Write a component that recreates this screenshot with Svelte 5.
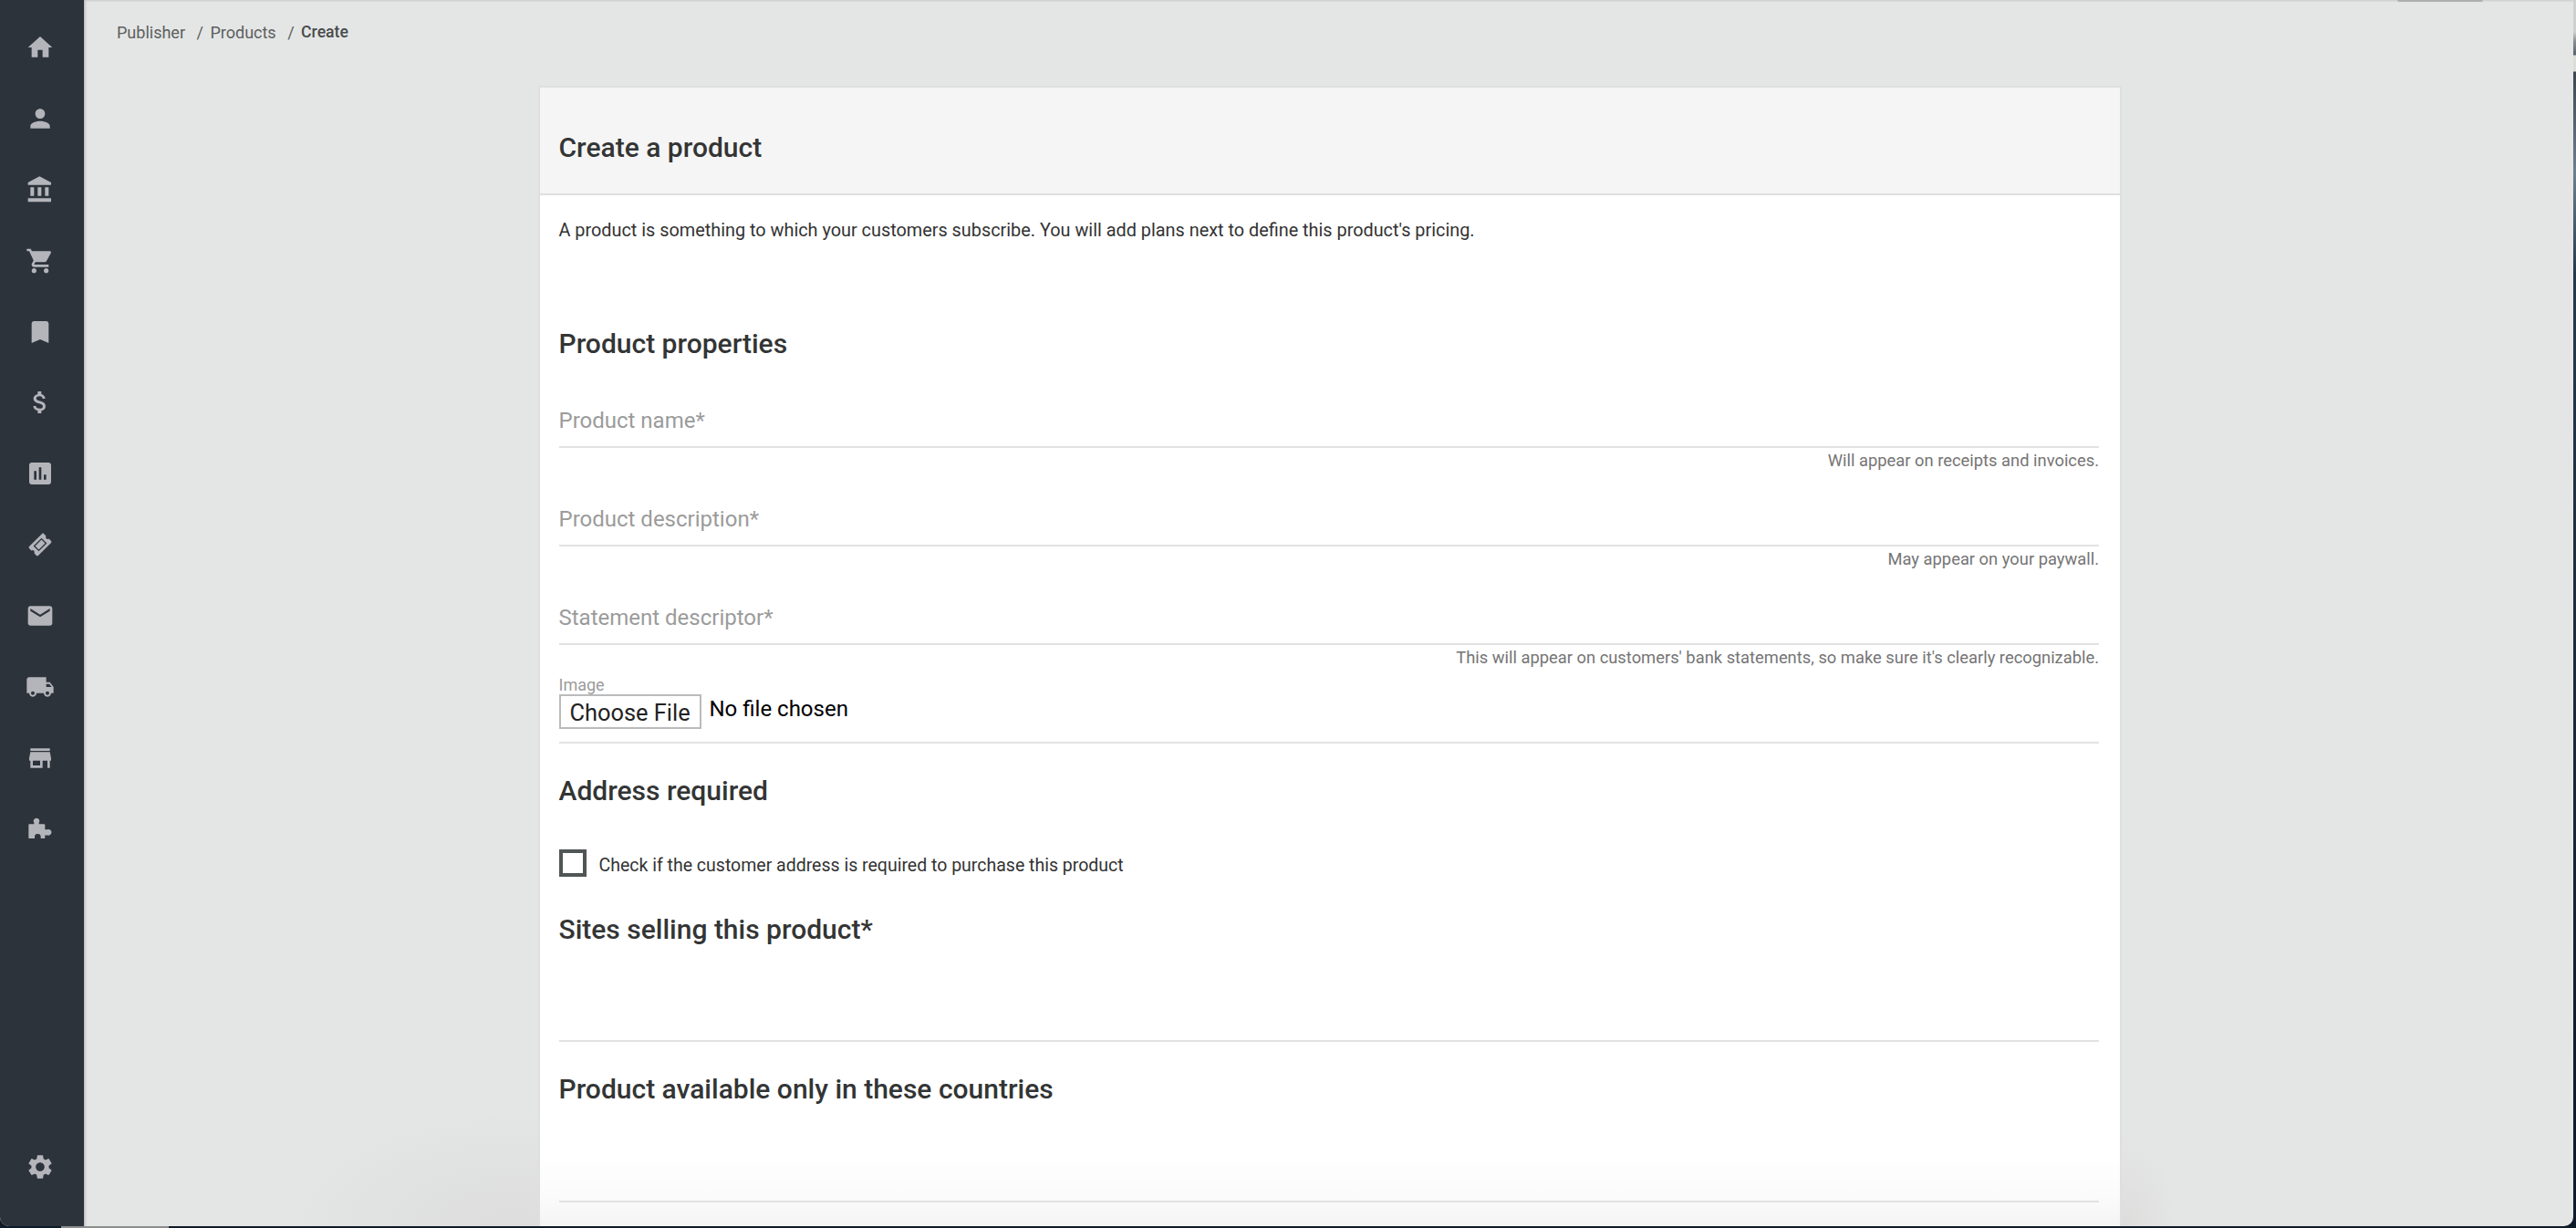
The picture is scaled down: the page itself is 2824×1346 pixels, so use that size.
<script>
  const icons = [
    { d: 'M10 20v-6h4v6h5v-8h3L12 3 2 12h3v8z' },
    { d: 'M12 12c2.21 0 4-1.79 4-4s-1.79-4-4-4-4 1.79-4 4 1.79 4 4 4zm0 2c-2.67 0-8 1.34-8 4v2h16v-2c0-2.66-5.33-4-8-4z' },
    { d: 'M4 10v7h3v-7H4zm6 0v7h3v-7h-3zM2 22h19v-3H2v3zm14-12v7h3v-7h-3zm-4.5-9L2 6v2h19V6l-9.5-5z' },
    { d: 'M7 18c-1.1 0-1.99.9-1.99 2S5.9 22 7 22s2-.9 2-2-.9-2-2-2zM1 2v2h2l3.6 7.59-1.35 2.45c-.16.28-.25.61-.25.96 0 1.1.9 2 2 2h12v-2H7.42c-.14 0-.25-.11-.25-.25l.03-.12.9-1.63h7.45c.75 0 1.41-.41 1.75-1.03l3.58-6.49c.08-.14.12-.31.12-.48 0-.55-.45-1-1-1H5.21l-.94-2H1zm16 16c-1.1 0-1.99.9-1.99 2s.89 2 1.99 2 2-.9 2-2-.9-2-2-2z' },
    { d: 'M17 3H7c-1.1 0-1.99.9-1.99 2L5 21l7-3 7 3V5c0-1.1-.9-2-2-2z' },
    { d: 'M11.8 10.9c-2.27-.59-3-1.2-3-2.15 0-1.09 1.01-1.85 2.7-1.85 1.78 0 2.44.85 2.5 2.1h2.21c-.07-1.72-1.12-3.3-3.21-3.81V3h-3v2.16c-1.94.42-3.5 1.68-3.5 3.61 0 2.31 1.91 3.46 4.7 4.13 2.5.6 3 1.48 3 2.41 0 .69-.49 1.79-2.7 1.79-2.06 0-2.87-.92-2.98-2.1h-2.2c.12 2.19 1.76 3.42 3.68 3.83V21h3v-2.15c1.95-.37 3.5-1.5 3.5-3.55 0-2.84-2.43-3.81-4.7-4.4z' },
    { d: 'M19 3H5c-1.1 0-2 .9-2 2v14c0 1.1.9 2 2 2h14c1.1 0 2-.9 2-2V5c0-1.1-.9-2-2-2zM9 17H7v-7h2v7zm4 0h-2V7h2v10zm4 0h-2v-4h2v4z' },
    // ticket drawn flat and turned, evenodd gives the ring inside it
    {
      d: 'M4.5 6.75h15c.55 0 1 .45 1 1v2.6a1.7 1.7 0 0 0 0 3.3v2.6c0 .55-.45 1-1 1h-15c-.55 0-1-.45-1-1v-2.6a1.7 1.7 0 0 0 0-3.3v-2.6c0-.55.45-1 1-1zM7.3 8.9v6.2h9.4V8.9H7.3zM8.3 9.9v4.2h7.4V9.9H8.3z',
      t: 'rotate(-45 12 12)'
    },
    { d: 'M20 4H4c-1.1 0-1.99.9-1.99 2L2 18c0 1.1.9 2 2 2h16c1.1 0 2-.9 2-2V6c0-1.1-.9-2-2-2zm0 4l-8 5-8-5V6l8 5 8-5v2z' },
    { d: 'M20 8h-3V4H3c-1.1 0-2 .9-2 2v11h2c0 1.66 1.34 3 3 3s3-1.34 3-3h6c0 1.66 1.34 3 3 3s3-1.34 3-3h2v-5l-3-4zM6 18.5c-.83 0-1.5-.67-1.5-1.5s.67-1.5 1.5-1.5 1.5.67 1.5 1.5-.67 1.5-1.5 1.5zm13.5-9l1.96 2.5H17V9.5h2.5zm-1.5 9c-.83 0-1.5-.67-1.5-1.5s.67-1.5 1.5-1.5 1.5.67 1.5 1.5-.67 1.5-1.5 1.5z' },
    { d: 'M20 4H4v2h16V4zm1 10v-2l-1-5H4l-1 5v2h1v6h10v-6h4v6h2v-6h1zm-9 4H6v-4h6v4z' },
    { d: 'M3 7.6h4v-1a2.4 2.4 0 1 1 4 0v1h4.3c.4 0 .7.3.7.7v3.9h1.9a2.5 2.5 0 1 1 0 4.6H16v2.1c0 .4-.3.6-.7.6h-2.8v-1.2a2.5 2.5 0 0 0-5 0v1.2H3c-.3 0-.5-.2-.5-.5V8.1c0-.3.2-.5.5-.5z' }
  ]
  const settings = 'M19.14 12.94c.04-.3.06-.61.06-.94 0-.32-.02-.64-.07-.94l2.03-1.58c.18-.14.23-.41.12-.61l-1.92-3.32c-.12-.22-.37-.29-.59-.22l-2.39.96c-.5-.38-1.03-.7-1.62-.94l-.36-2.54c-.04-.24-.24-.41-.48-.41h-3.84c-.24 0-.43.17-.47.41l-.36 2.54c-.59.24-1.13.57-1.62.94l-2.39-.96c-.22-.08-.47 0-.59.22L2.74 8.87c-.12.21-.08.47.12.61l2.03 1.58c-.05.3-.09.63-.09.94s.02.64.07.94l-2.03 1.58c-.18.14-.23.41-.12.61l1.92 3.32c.12.22.37.29.59.22l2.39-.96c.5.38 1.03.7 1.62.94l.36 2.54c.05.24.24.41.48.41h3.84c.24 0 .44-.17.47-.41l.36-2.54c.59-.24 1.13-.56 1.62-.94l2.39.96c.22.08.47 0 .59-.22l1.92-3.32c.12-.22.07-.47-.12-.61l-2.01-1.58zM12 15.6c-1.98 0-3.6-1.62-3.6-3.6s1.62-3.6 3.6-3.6 3.6 1.62 3.6 3.6-1.62 3.6-3.6 3.6z'

  const fields = [
    { label: 'Product name*', hint: 'Will appear on receipts and invoices.' },
    { label: 'Product description*', hint: 'May appear on your paywall.' },
    { label: 'Statement descriptor*', hint: "This will appear on customers' bank statements, so make sure it's clearly recognizable." }
  ]
</script>

<div class="desktop">
  <div class="window">
    <nav class="sidebar">
      <div class="nav-top">
        {#each icons as icon}
          <a class="nav-item" href="#top">
            <svg viewBox="0 0 24 24"><path d={icon.d} transform={icon.t} fill-rule="evenodd" /></svg>
          </a>
        {/each}
      </div>
      <a class="nav-item" href="#top"><svg viewBox="0 0 24 24"><path d={settings} /></svg></a>
    </nav>

    <main class="main">
      <span class="smudge"></span>
      <div class="crumbs">
        <span>Publisher</span>
        <span class="sep">/</span>
        <span>Products</span>
        <span class="sep">/</span>
        <span class="current">Create</span>
      </div>

      <section class="card">
        <header class="card-head">
          <h1>Create a product</h1>
        </header>
        <div class="card-body">
          <p class="intro">A product is something to which your customers subscribe. You will add plans next to define this product's pricing.</p>

          <h2 class="props">Product properties</h2>

          {#each fields as f}
            <div class="field">
              <div class="field-input">{f.label}</div>
              <div class="hint">{f.hint}</div>
            </div>
          {/each}

          <div class="image-field">
            <div class="image-label">Image</div>
            <div class="file-row">
              <span class="file-btn">Choose File</span>
              <span class="file-name">No file chosen</span>
            </div>
          </div>

          <h2 class="address">Address required</h2>
          <div class="check-row">
            <span class="checkbox"></span>
            <span class="check-text">Check if the customer address is required to purchase this product</span>
          </div>

          <h2 class="sites">Sites selling this product*</h2>
          <div class="empty sites-box"></div>

          <h2 class="countries">Product available only in these countries</h2>
          <div class="empty countries-box"></div>
        </div>
      </section>
    </main>
  </div>
</div>

<style>
  :global(body) {
    margin: 0;
    background: #0f1b29;
  }
  .desktop {
    width: 2824px;
    height: 1346px;
    overflow: hidden;
    font-family: Roboto, "Liberation Sans", sans-serif;
    background:
      linear-gradient(90deg, transparent 67px, #8d8d8d 67px, #8d8d8d 185px, transparent 185px) bottom / 100% 2px no-repeat,
      linear-gradient(#d0d0d0 35px, #8a8f94 45px, #59636c 60px, #dcdcd8 61px, #dcdcd8 78px, #3d4650 79px, #6d7f8e 190px, #26384a 300px, #0f1b29 1200px);
  }
  .window {
    display: flex;
    width: 2821px;
    height: 1344px;
    overflow: hidden;
    border-radius: 0 0 10px 10px;
    background: #e4e6e5;
  }
  .sidebar {
    flex: none;
    width: 92px;
    display: flex;
    flex-direction: column;
    justify-content: space-between;
    background: #2c333b;
    padding: 13px 0 26px;
    box-sizing: border-box;
  }
  .nav-top {
    display: flex;
    flex-direction: column;
  }
  .nav-item {
    display: flex;
    align-items: center;
    justify-content: center;
    height: 77.9px;
    padding-right: 4px;
  }
  .nav-item svg {
    width: 32px;
    height: 32px;
    fill: #b4b5ba;
  }
  .main {
    position: relative;
    flex: 1;
    min-width: 0;
    box-sizing: border-box;
    padding: 21px 0 0 3px;
    background:
      radial-gradient(ellipse 260px 130px at 470px 100%, #dcdddc, transparent),
      radial-gradient(ellipse 60px 100px at 2236px 100%, #dddddc, transparent);
    box-shadow: inset 3px 2px 3px -2px rgba(0, 0, 0, 0.25);
    overflow: hidden;
  }
  .smudge {
    position: absolute;
    top: 0;
    left: 2536px;
    width: 94px;
    height: 2px;
    border-radius: 0 0 4px 4px;
    background: #aeb0af;
  }
  .crumbs {
    display: flex;
    align-items: center;
    height: 28px;
    padding-left: 33px;
    font-size: 18px;
    color: #5c5f60;
  }
  .sep {
    margin: 0 7.5px 0 12.5px;
  }
  .current {
    font-size: 17.6px;
    font-weight: 500;
    color: #484b4c;
  }
  .card {
    box-sizing: border-box;
    width: 1736px;
    margin: 45px auto 0;
    border: 2px solid #dedfde;
    border-bottom: 0;
    background: linear-gradient(#fff 1170px, #fbfbfb 1215px, #f4f4f4 1248px);
    height: 1400px;
  }
  .card-head {
    display: flex;
    align-items: center;
    box-sizing: border-box;
    height: 116px;
    padding: 16px 20.5px 0;
    background: #f5f5f5;
  }
  h1, h2 {
    margin: 0;
    font-size: 30px;
    line-height: 36px;
    font-weight: 500;
    color: #333535;
  }
  .card-body {
    border-top: 2px solid #dedfde;
    padding: 0 23px 0 20.5px;
  }
  .intro {
    margin: 26px 0 0;
    font-size: 19.85px;
    line-height: 26px;
    color: #333;
  }
  .props {
    margin-top: 93px;
  }
  .field {
    height: 108px;
    box-sizing: border-box;
  }
  .props + .field {
    margin-top: 36px;
  }
  .field-input {
    height: 60px;
    line-height: 61px;
    box-sizing: border-box;
    border-bottom: 2px solid #e2e2e2;
    font-size: 24px;
    color: #9b9b9b;
  }
  .hint {
    margin-top: 3px;
    text-align: right;
    font-size: 18.35px;
    line-height: 22px;
    color: #757575;
  }
  .image-field {
    height: 74px;
    margin-top: -14px;
    box-sizing: border-box;
    border-bottom: 2px solid #e2e2e2;
  }
  .image-label {
    font-size: 18px;
    line-height: 20px;
    color: #9b9b9b;
  }
  .file-row {
    display: flex;
    align-items: flex-start;
  }
  .file-btn {
    box-sizing: border-box;
    height: 38px;
    width: 156px;
    text-align: center;
    line-height: 36px;
    font-size: 25.4px;
    color: #222;
    background: #fff;
    border: 2px solid #bbb;
  }
  .file-name {
    margin-left: 9px;
    font-size: 24px;
    line-height: 32px;
    color: #000;
  }
  .address {
    margin-top: 34px;
  }
  .check-row {
    display: flex;
    align-items: center;
    gap: 14px;
    margin-top: 46px;
    font-size: 19.5px;
    color: #333;
  }
  .check-text {
    padding-top: 4px;
  }
  .checkbox {
    box-sizing: border-box;
    width: 30px;
    height: 30px;
    border: 4px solid #505555;
  }
  .sites {
    margin-top: 40px;
  }
  .empty {
    border-bottom: 2px solid #e2e2e2;
    box-sizing: border-box;
  }
  .sites-box {
    height: 105px;
  }
  .countries {
    margin-top: 34px;
  }
  .countries-box {
    height: 106px;
  }
</style>
